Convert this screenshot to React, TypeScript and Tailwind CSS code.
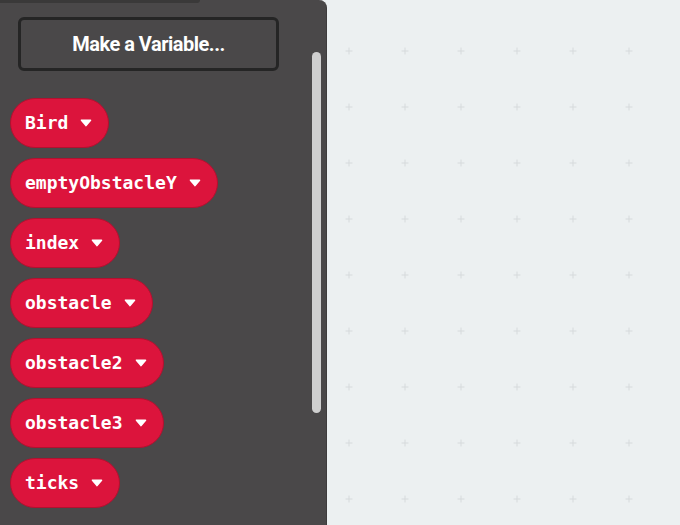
import { Fragment } from 'react';

const variables = ['Bird', 'emptyObstacleY', 'index', 'obstacle', 'obstacle2', 'obstacle3', 'ticks'];

const Caret = () => (
    <svg width="12" height="8" viewBox="0 0 12 8" className="shrink-0">
        <path d="M1.5 1.2 H10.5 L6 6.6 Z" fill="#fff" stroke="#fff" strokeWidth="1.6" strokeLinejoin="round" />
    </svg>
);

const VariablePill = ({ name }: { name: string }) => (
    <div className="flex h-[50px] items-center gap-3 self-start rounded-full border border-[#b3102f] bg-[#dc143c] pl-[14px] pr-[16px]">
        <span className="text-[18px] font-bold leading-none text-white [font-family:'DejaVu_Sans_Mono',monospace]">{name}</span>
        <Caret />
    </div>
);

const Workspace = () => (
    <svg className="h-full w-full" xmlns="http://www.w3.org/2000/svg">
        <defs>
            <pattern id="grid" width="56" height="56" patternUnits="userSpaceOnUse" x="-6" y="23">
                <path d="M24.5 28 H31.5 M28 24.5 V31.5" stroke="#d6dadc" strokeWidth="1" />
            </pattern>
        </defs>
        <rect width="100%" height="100%" fill="url(#grid)" />
    </svg>
);

export default function App() {
    return (
        <div className="flex h-[525px] w-[680px] overflow-hidden bg-[#ecf0f1] [font-family:Roboto,'Liberation_Sans',sans-serif]">
            {/* Flyout */}
            <div className="relative w-[327px] shrink-0 rounded-tr-[8px] border-r border-[#3e3c3d] bg-[#4a4849]">
                <div className="absolute left-0 top-0 h-[3px] w-[200px] rounded-br-[3px] bg-[#3a3939]" />
                <div className="absolute right-[5px] top-[52px] h-[361px] w-[9px] rounded-full bg-[#cfcfcf]" />

                <div className="flex flex-col pl-[10px] pt-[17px]">
                    <button className="ml-[8px] flex h-[54px] w-[261px] items-center justify-center rounded-[6px] border-[3px] border-[#252525] bg-[#4a4849] text-[20px] font-bold tracking-[-0.5px] text-white">
                        Make a Variable...
                    </button>
                    <div className="mt-[27px] flex flex-col gap-[10px]">
                        {variables.map(v => (
                            <Fragment key={v}>
                                <VariablePill name={v} />
                            </Fragment>
                        ))}
                    </div>
                </div>
            </div>

            {/* Workspace */}
            <div className="flex-1">
                <Workspace />
            </div>
        </div>
    );
}
